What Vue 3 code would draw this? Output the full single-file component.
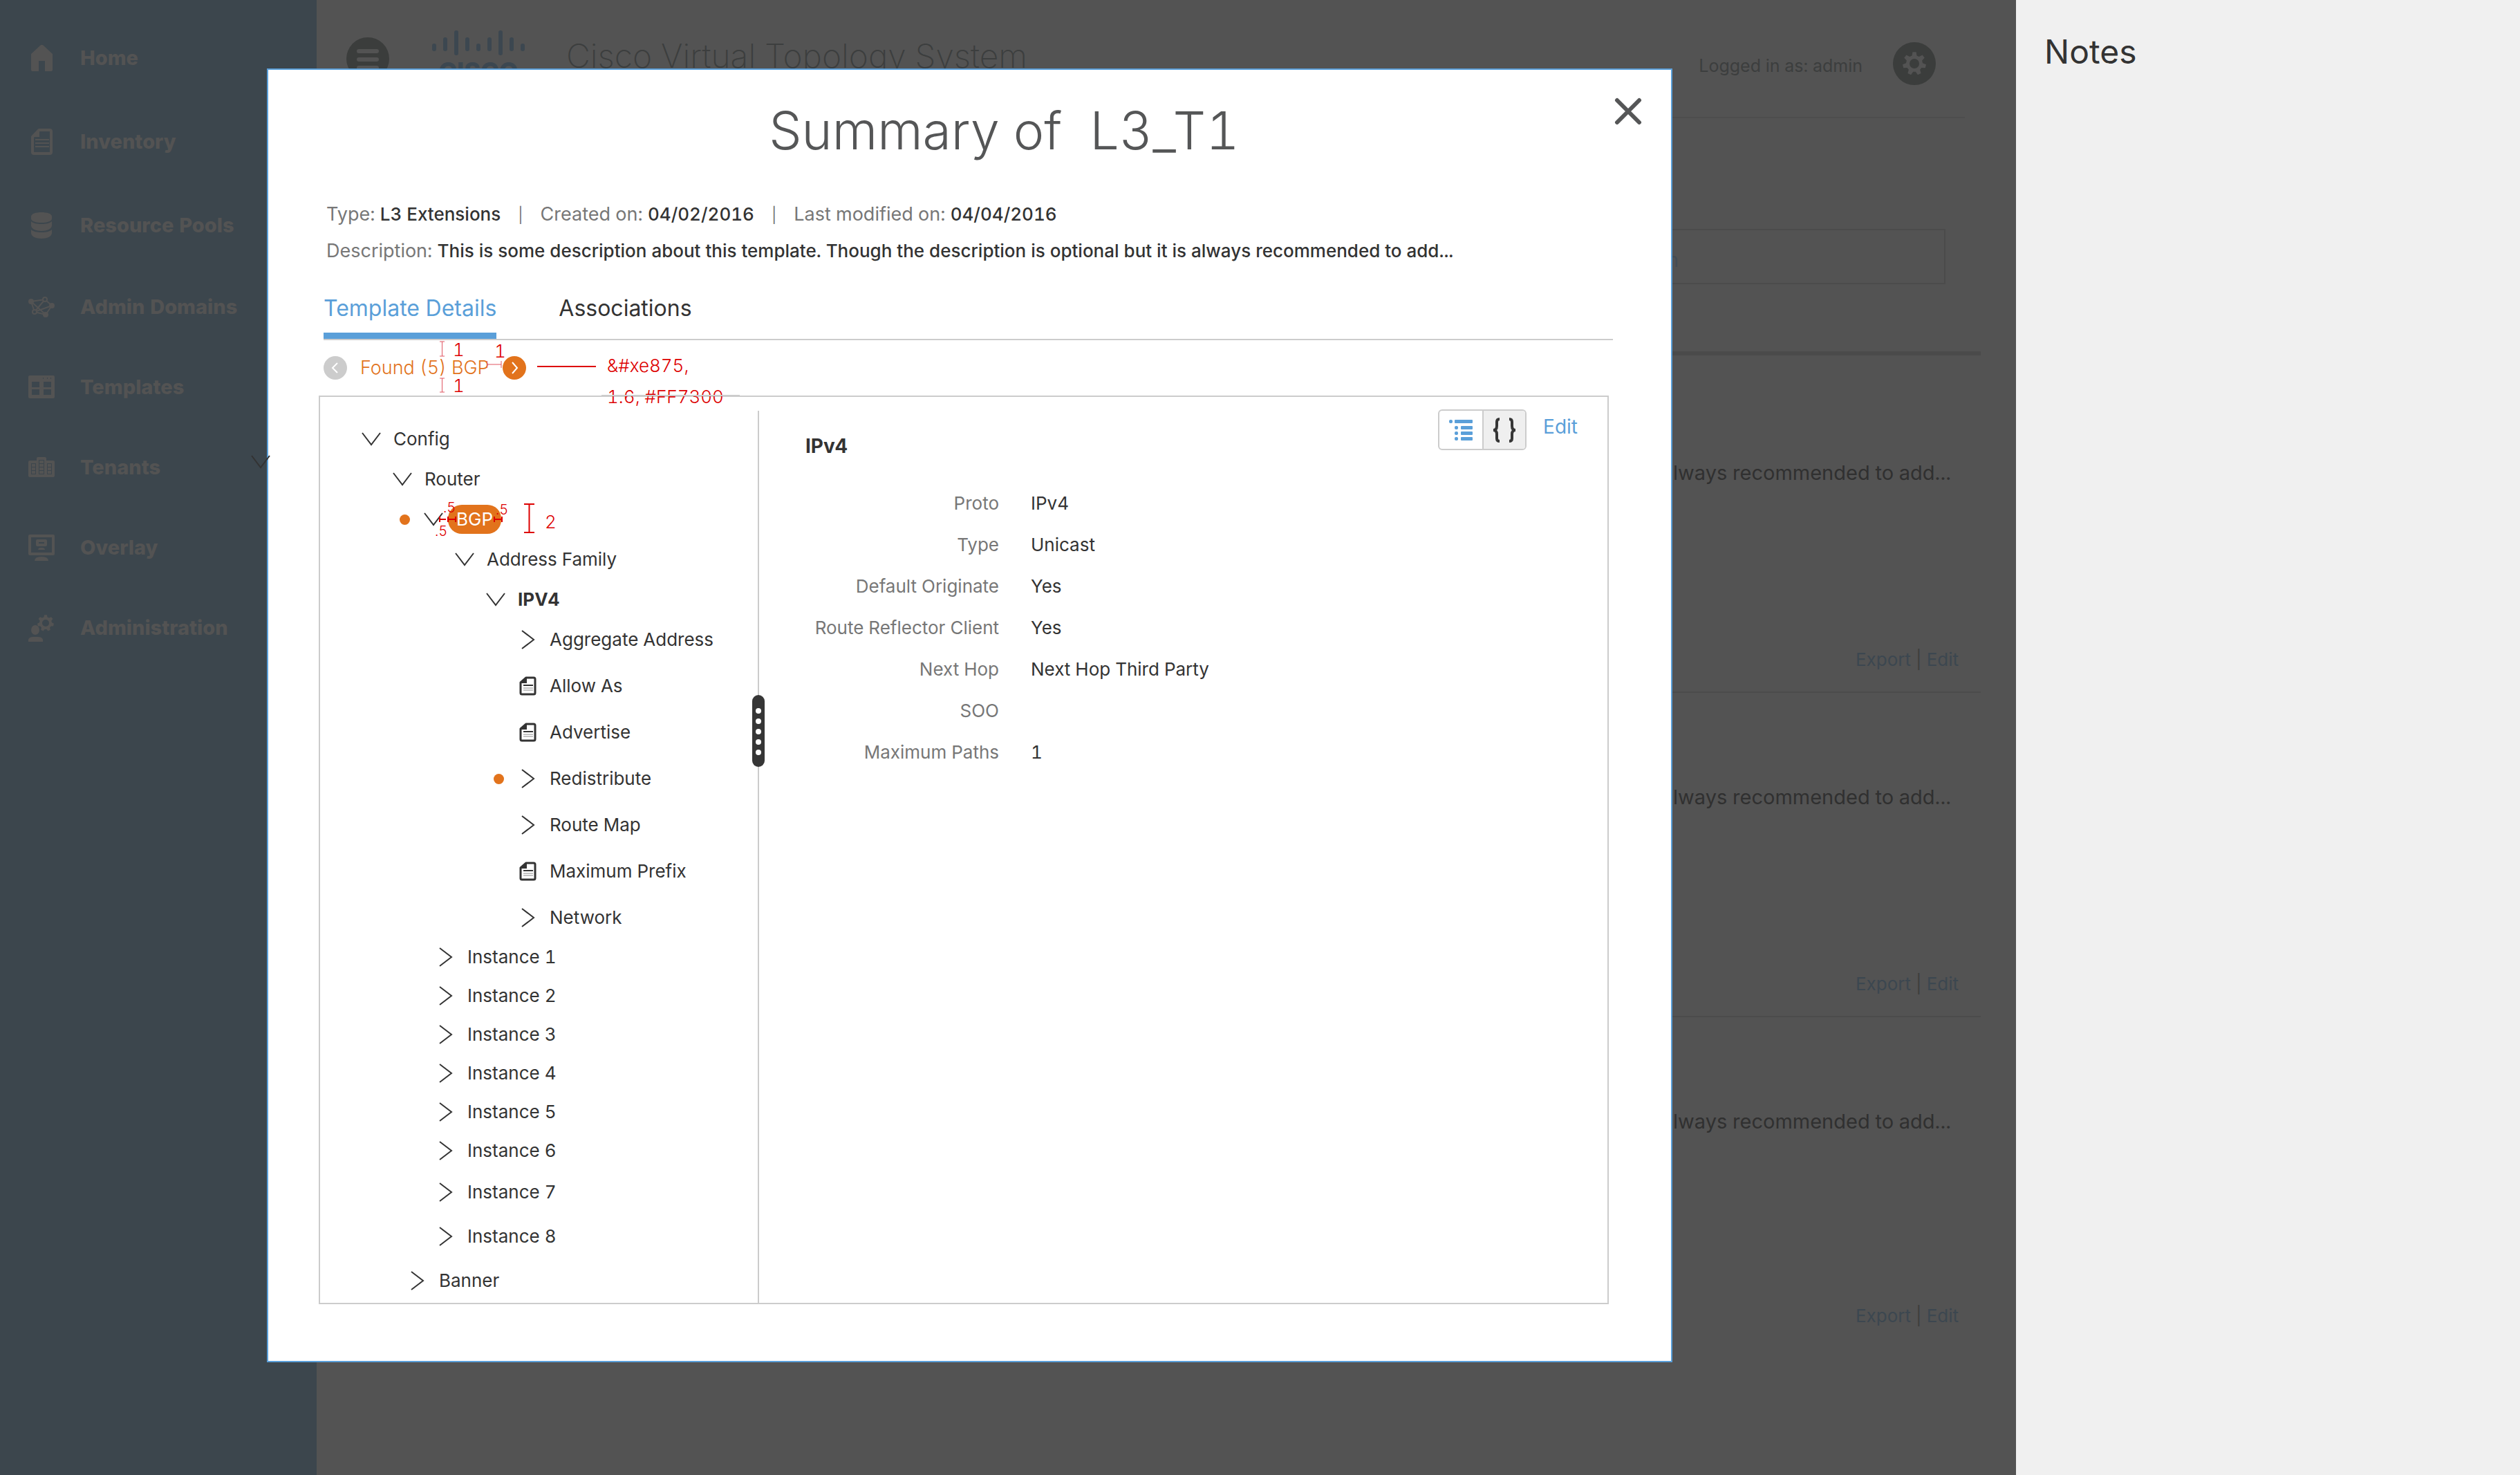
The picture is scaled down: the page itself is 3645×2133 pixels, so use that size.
<script setup>
const primaryNav = [
  { icon: 'home', label: 'Home' },
  { icon: 'document', label: 'Inventory' },
  { icon: 'database', label: 'Resource Pools' },
]
const secondaryNav = [
  { icon: 'network', label: 'Admin Domains' },
  { icon: 'template', label: 'Templates' },
  { icon: 'buildings', label: 'Tenants' },
  { icon: 'monitor', label: 'Overlay' },
  { icon: 'admin', label: 'Administration' },
]
const navGroups = [
  { name: 'primary', items: primaryNav },
  { name: 'secondary', items: secondaryNav },
]

const tree = [
  {
    name: 'branch',
    nodes: [
      { label: 'Config', icon: 'down', indent: 60 },
      { label: 'Router', icon: 'down', indent: 105 },
      { label: 'BGP', icon: 'down', indent: 150, hit: true, badge: true },
      { label: 'Address Family', icon: 'down', indent: 195 },
      { label: 'IPV4', icon: 'down', indent: 240, active: true },
      { label: 'Aggregate Address', icon: 'right', indent: 286 },
    ],
  },
  {
    name: 'leaf',
    nodes: [
      { label: 'Allow As', icon: 'doc', indent: 286 },
      { label: 'Advertise', icon: 'doc', indent: 286 },
      { label: 'Redistribute', icon: 'right', indent: 286, hit: true },
      { label: 'Route Map', icon: 'right', indent: 286 },
      { label: 'Maximum Prefix', icon: 'doc', indent: 286 },
      { label: 'Network', icon: 'right', indent: 286 },
    ],
  },
  {
    name: 'instance',
    nodes: [1, 2, 3, 4, 5, 6].map((n) => ({ label: `Instance ${n}`, icon: 'right', indent: 167 })),
  },
  {
    name: 'tail',
    nodes: [
      { label: 'Instance 7', icon: 'right', indent: 167 },
      { label: 'Instance 8', icon: 'right', indent: 167 },
      { label: 'Banner', icon: 'right', indent: 126 },
    ],
  },
]

const details = [
  ['Proto', 'IPv4'],
  ['Type', 'Unicast'],
  ['Default Originate', 'Yes'],
  ['Route Reflector Client', 'Yes'],
  ['Next Hop', 'Next Hop Third Party'],
  ['SOO', ''],
  ['Maximum Paths', '1'],
]

// Seven-toothed cog with a round hole, drawn around (cx, cy).
function cog(cx, cy, outer, inner, hole) {
  const step = (Math.PI * 2) / 7
  const pts = []
  for (let i = 0; i < 7; i++) {
    const a = i * step - Math.PI / 2
    for (const [r, d] of [[inner, -0.33], [outer, -0.17], [outer, 0.17], [inner, 0.33]]) {
      pts.push(`${(cx + r * Math.cos(a + d * step)).toFixed(2)} ${(cy + r * Math.sin(a + d * step)).toFixed(2)}`)
    }
  }
  return `M${pts.join('L')}ZM${cx - hole} ${cy}a${hole} ${hole} 0 1 0 ${hole * 2} 0a${hole} ${hole} 0 1 0 ${-hole * 2} 0Z`
}
const settingsCog = cog(31, 31, 17, 12, 7)
const adminCog = cog(26, 13, 12, 9, 5)

const logoBars = [
  [61, 72], [52, 72], [42, 78], [52, 72], [61, 72], [52, 72], [42, 78], [52, 72], [61, 72],
]
</script>

<template>
  <div class="page">
    <div class="stage">
      <div class="app">
        <nav class="sidebar">
          <ul v-for="group in navGroups" :key="group.name" :class="['nav', group.name]">
            <li v-for="item in group.items" :key="item.label">
              <a href="#">
                <svg width="40" height="40" viewBox="0 0 40 40" aria-hidden="true">
                  <path v-if="item.icon === 'home'" fill="currentColor" d="M18.500 1.500q2-1.500 4 0L36 14v23q0 2-2 2h-9V24H16v15H7q-2 0-2-2V14Z" />
                  <g v-else-if="item.icon === 'document'" fill="none" stroke="currentColor">
                    <path stroke-width="4" stroke-linejoin="round" d="M16.500 3H32q2 0 2 2v30q0 2-2 2H9q-2 0-2-2V13Z" />
                    <path fill="currentColor" stroke="none" d="M17 2v11H6Z" />
                    <path stroke-width="2" d="M11 17h20M11 22h20M11 27h20" />
                  </g>
                  <g v-else-if="item.icon === 'database'" fill="currentColor">
                    <path d="M5 7C5 3 12 1 20 1s15 2 15 6v3c0 4-7 6-15 6S5 14 5 10Z" />
                    <path d="M5 14c3 3 9 4 15 4s12-1 15-4v6c0 5-7 8-15 8S5 25 5 20Z" />
                    <path d="M5 26c3 3 9 4 15 4s12-1 15-4v5c0 5-7 8-15 8S5 36 5 31Z" />
                  </g>
                  <g v-else-if="item.icon === 'network'" fill="none" stroke="currentColor" stroke-width="2">
                    <path d="M5 12 25 9 35 18 26 31 5 12 10 27 25 9M10 27l16 4M10 27 35 18" />
                    <circle cx="5" cy="12" r="4" fill="currentColor" stroke="none" />
                    <circle cx="35" cy="18" r="4" fill="currentColor" stroke="none" />
                    <circle cx="26" cy="31" r="4" fill="currentColor" stroke="none" />
                    <circle cx="25" cy="9" r="3" fill="#3c464d" />
                    <circle cx="10" cy="27" r="3" fill="#3c464d" />
                  </g>
                  <path v-else-if="item.icon === 'template'" fill="currentColor" fill-rule="evenodd" d="M3 3h34q2 0 2 2v29q0 2-2 2H3q-2 0-2-2V5q0-2 2-2ZM6 12v8h11v-8ZM23 12v8h11v-8ZM6 23v8h11v-8ZM23 23v8h11v-8ZM22 6h1v2h-1ZM28 6h1v2h-1ZM33 6h1v2h-1Z" />
                  <g v-else-if="item.icon === 'buildings'" fill="currentColor">
                    <path fill-rule="evenodd" d="M3 10h10V7q0-2 2-2h10q2 0 2 2v3h10q2 0 2 2v20q0 2-2 2H3q-2 0-2-2V12q0-2 2-2ZM5 14v16h7V14ZM16 9v21h8V9ZM28 14v16h7V14Z" />
                    <path d="M6 15h5v4H6zM6 20h5v4H6zM6 25h5v4H6zM17 10h6v4h-6zM17 15h6v4h-6zM17 20h6v4h-6zM17 25h6v4h-6zM29 15h5v4h-5zM29 20h5v4h-5zM29 25h5v4h-5z" />
                  </g>
                  <g v-else-if="item.icon === 'monitor'">
                    <path fill="none" stroke="currentColor" stroke-width="4" stroke-linejoin="round" d="M3 3h34v26H3ZM14 10h12v6H14Z" />
                    <path fill="currentColor" d="M15 23q0-3 5-3t5 3ZM10 39q0-6 10-6t10 6Z" />
                  </g>
                  <g v-else fill="currentColor">
                    <path fill-rule="evenodd" :d="adminCog" />
                    <ellipse cx="11" cy="23" rx="6" ry="7" />
                    <path d="M1 40v-3q1-4 7-4h7q6 0 7 4v3Z" />
                  </g>
                </svg>
                <span>{{ item.label }}</span>
              </a>
            </li>
          </ul>
        </nav>

        <div class="main">
          <header class="topbar">
            <button class="menu" aria-label="Menu">
              <svg width="62" height="62" viewBox="0 0 62 62">
                <circle cx="31" cy="31" r="31" fill="#3b3d3c" />
                <path stroke="#535353" stroke-width="6" stroke-linecap="round" d="M18 20h26M18 32h26M18 44h26" />
              </svg>
            </button>
            <svg class="logo" width="134" height="86" viewBox="0 40 134 86" aria-label="Cisco">
              <path v-for="(bar, i) in logoBars" :key="i" :d="`M${3 + i * 16} ${bar[0] + 3}V${bar[1] - 3}`" stroke="#3c4750" stroke-width="6" stroke-linecap="round" />
              <text x="67" y="114" text-anchor="middle">CISCO</text>
            </svg>
            <h1>Cisco Virtual Topology System</h1>
            <div class="account">
              <span>Logged in as: admin</span>
              <button aria-label="Settings">
                <svg width="62" height="62" viewBox="0 0 62 62">
                  <circle cx="31" cy="31" r="31" fill="#3b3d3c" />
                  <path fill="#535353" fill-rule="evenodd" :d="settingsCog" />
                </svg>
              </button>
            </div>
          </header>
          <div class="search">
            <input type="text" placeholder="Description" aria-label="Description" />
          </div>
          <ul class="cards">
            <li v-for="n in 3" :key="n">
              <p>always recommended to add...</p>
              <div class="actions"><a href="#">Export</a> | <a href="#">Edit</a></div>
            </li>
          </ul>
        </div>
      </div>

      <section class="dialog" role="dialog" aria-labelledby="dialog-title">
        <header class="dialog-head">
          <h2 id="dialog-title">Summary of&nbsp; L3_T1</h2>
          <button class="close" aria-label="Close">
            <svg width="40" height="40" viewBox="0 0 40 40"><path d="M4 4 36 36M36 4 4 36" stroke="#555657" stroke-width="6" stroke-linecap="round" /></svg>
          </button>
        </header>

        <div class="meta">
          <p>
            <span>Type: <b>L3 Extensions</b></span><i>|</i><span>Created on: <b>04/02/2016</b></span><i>|</i><span>Last modified on: <b>04/04/2016</b></span>
          </p>
          <p>Description: <b>This is some description about this template. Though the description is optional but it is always recommended to add...</b></p>
        </div>

        <div class="tabs" role="tablist">
          <button class="current" role="tab" aria-selected="true">Template Details</button>
          <button role="tab" aria-selected="false">Associations</button>
        </div>

        <div class="finder">
          <button aria-label="Previous match" disabled>
            <svg width="34" height="34" viewBox="0 0 34 34"><circle cx="17" cy="17" r="17" fill="#ccc" /><path d="m20 10-7 7 7 7" fill="none" stroke="#fff" stroke-width="2" /></svg>
          </button>
          <span>Found (5) BGP</span>
          <button aria-label="Next match">
            <svg width="34" height="34" viewBox="0 0 34 34"><circle cx="17" cy="17" r="17" fill="#e2731c" /><path d="m14 9 7 8-7 8" fill="none" stroke="#fff" stroke-width="2" /></svg>
          </button>
        </div>

        <div class="panel">
          <div class="tree">
            <ul v-for="group in tree" :key="group.name" :class="group.name">
              <li v-for="node in group.nodes" :key="node.label" :style="{ paddingLeft: node.indent + 'px' }">
                <button :class="{ active: node.active }">
                  <i v-if="node.hit" class="hit"></i>
                  <svg width="28" height="28" viewBox="0 0 28 28" aria-hidden="true">
                    <path v-if="node.icon === 'down'" d="m1 5 13 17L27 5" fill="none" stroke="#333" stroke-width="2" />
                    <path v-else-if="node.icon === 'right'" d="m6 1 17 13L6 27" fill="none" stroke="#333" stroke-width="2" />
                    <g v-else fill="none" stroke="#333">
                      <path d="M12 2h11q2 0 2 2v20q0 2-2 2H6q-2 0-2-2V9Z" stroke-width="3" stroke-linejoin="round" />
                      <path d="M13 2v8H4Z" fill="#333" stroke="none" />
                      <path d="M8 13h14" stroke-width="2" />
                      <path d="M8 17h14M8 20h14" stroke="#888" />
                    </g>
                  </svg>
                  <span :class="{ badge: node.badge }">{{ node.label }}</span>
                </button>
              </li>
            </ul>
            <div class="divider">
              <svg width="18" height="104" viewBox="0 0 18 104" aria-hidden="true">
                <rect width="18" height="104" rx="9" fill="#363636" />
                <circle v-for="n in 5" :key="n" cx="9" :cy="8 + n * 15" r="4" fill="#fff" />
              </svg>
            </div>
          </div>

          <div class="details">
            <div class="details-head">
              <h3>IPv4</h3>
              <div class="toggle">
                <button aria-label="Tree view">
                  <svg width="34" height="32" viewBox="0 0 34 32" fill="#5a9fd9">
                    <rect x="0" y="1" width="5" height="5" rx="2" /><rect x="8" y="1" width="26" height="5" rx="1" />
                    <rect x="8" y="10" width="5" height="5" rx="2" /><rect x="17" y="10" width="17" height="5" rx="1" />
                    <rect x="8" y="18" width="5" height="5" rx="2" /><rect x="17" y="18" width="17" height="5" rx="1" />
                    <rect x="8" y="26" width="5" height="5" rx="2" /><rect x="17" y="26" width="17" height="5" rx="1" />
                  </svg>
                </button>
                <button class="pressed" aria-label="Code view">
                  <svg width="34" height="36" viewBox="0 0 34 36" fill="none" stroke="#363636" stroke-width="4">
                    <path d="M10 2q-4 0-4 4v6q0 6-5 6q5 0 5 6v6q0 4 4 4M24 2q4 0 4 4v6q0 6 5 6q-5 0-5 6v6q0 4-4 4" />
                  </svg>
                </button>
              </div>
              <a href="#">Edit</a>
            </div>
            <dl>
              <div v-for="row in details" :key="row[0]">
                <dt>{{ row[0] }}</dt>
                <dd>{{ row[1] }}</dd>
              </div>
            </dl>
          </div>
        </div>
      </section>

      <!-- Spacing notes drawn over the dialog; the origin is the dialog's corner. -->
      <svg class="notes-layer" width="760" height="720" viewBox="386 99 760 720">
        <g fill="none" stroke="#e05560">
          <path d="M636 494h7M639.500 494v21M636 515h7M636 547h7M639.500 547v20M636 567h7" />
          <path d="M704.500 522v10M704 527h21M725 522v10" />
        </g>
        <g fill="none" stroke="#dd0000" stroke-width="2">
          <path d="M777 530h85M758 729h15M765.500 729v41M758 770h15" />
          <path d="M636 747v8M636 751h9M648 747v8M648 751h11M659 747v8M715 747v8M715 751h12M726 747v8" />
        </g>
        <g class="note">
          <text x="655" y="515">1</text>
          <text x="655" y="567">1</text>
          <text x="715" y="517">1</text>
          <text x="878" y="538">&amp;#xe875,</text>
          <text x="878" y="583">1.6, #FF7300</text>
          <text x="788" y="764">2</text>
        </g>
        <g class="note small">
          <text x="641" y="741">.5</text>
          <text x="717" y="744">.5</text>
          <text x="629" y="775">.5</text>
        </g>
        <path d="M870 572h200" stroke="#ccc" stroke-width="2" />
      </svg>
      <svg class="stray" width="28" height="20" viewBox="0 0 28 20" aria-hidden="true"><path d="m1 1 13 17L27 1" fill="none" stroke="#333" stroke-width="2" /></svg>
    </div>

    <aside class="notes">
      <h2>Notes</h2>
    </aside>
  </div>
</template>

<style>
body {
  margin: 0;
}
</style>

<style scoped>
.page {
  display: flex;
  min-height: 100vh;
  font-family: Inter, "Liberation Sans", sans-serif;
  font-size: 26px;
  line-height: 38px;
  font-variant-numeric: tabular-nums;
  color: #333;
  background: #535353;
}
h1, h2, h3, p, ul, dl, dd {
  margin: 0;
  padding: 0;
}
ul {
  list-style: none;
}
a {
  text-decoration: none;
}
button {
  padding: 0;
  border: 0;
  background: none;
  font: inherit;
  font-variant-numeric: inherit;
  color: inherit;
}
svg {
  display: block;
  flex: none;
}
i {
  font-style: normal;
}

.stage {
  position: relative;
  display: grid;
  flex: 1;
  min-width: 0;
}
.app {
  grid-area: 1 / 1;
  display: flex;
}

/* Sidebar */
.sidebar {
  box-sizing: border-box;
  width: 458px;
  padding-top: 23px;
  background: #3c464d;
}
.nav a {
  display: flex;
  align-items: center;
  gap: 36px;
  padding-left: 40px;
  font-size: 29px;
  font-weight: 800;
  color: #535353;
}
.primary a {
  height: 121px;
}
.secondary a {
  height: 116px;
}

/* Page behind the dialog */
.main {
  flex: 1;
  min-width: 0;
  color: #3c3e3e;
}
.topbar {
  display: flex;
  align-items: center;
  height: 169px;
  margin: 0 74px 0 43px;
  padding-right: 42px;
  border-bottom: 2px solid #4d4d4d;
}
.logo {
  margin-left: 62px;
}
.logo text {
  font-size: 36px;
  font-weight: 800;
  fill: #3c4750;
}
h1 {
  flex: 1;
  margin-left: 60px;
  padding-bottom: 8px;
  font-size: 48px;
  font-weight: 200;
  line-height: 60px;
}
.account {
  display: flex;
  align-items: center;
  gap: 44px;
  padding-top: 14px;
}
.account span {
  padding-top: 6px;
  font-size: 25px;
}
.search {
  display: flex;
  justify-content: flex-end;
  margin: 160px 51px 0 43px;
  padding: 0 51px 97px 0;
  border-bottom: 6px solid #4a4a4a;
}
.search input {
  box-sizing: border-box;
  width: 640px;
  height: 80px;
  padding: 10px 384px 0 16px;
  border: 2px solid #4b4b4b;
  background: none;
  font: inherit;
  font-size: 28px;
  text-align: right;
}
.search input::placeholder {
  color: #444c55;
  opacity: 1;
}
.cards {
  margin: 0 51px 0 43px;
  padding-top: 19px;
  text-align: right;
}
.cards li {
  box-sizing: border-box;
  height: 469px;
  padding-top: 132px;
  border-bottom: 2px solid #4b4b4b;
}
.cards li:last-child {
  border-bottom: 0;
}
.cards p {
  padding-right: 43px;
  font-size: 29px;
  color: #303030;
}
.actions {
  margin-top: 232px;
  padding-right: 32px;
}
.cards li:last-child .actions {
  margin-top: 243px;
}
.actions a {
  color: #3c4750;
}

/* Dialog */
.dialog {
  grid-area: 1 / 1;
  z-index: 1;
  align-self: start;
  margin: 99px 497px 166px 386px;
  padding-bottom: 82px;
  border: 2px solid #5a9fd9;
  background: #fff;
}
.dialog-head {
  display: flex;
  align-items: flex-start;
  padding: 48px 42px 0 182px;
}
.dialog-head h2 {
  flex: 1;
  font-size: 75px;
  font-weight: 300;
  line-height: 80px;
  text-align: center;
  color: #555657;
}
.close {
  margin-top: -8px;
}
.meta {
  padding: 55px 80px 0 84px;
  font-size: 27px;
  line-height: 52px;
  color: #777;
}
.meta b {
  font-size: 26px;
  font-weight: 500;
  color: #333;
}
.meta i {
  padding: 0 25px;
  font-size: 22px;
}
.tabs {
  display: flex;
  gap: 90px;
  margin: 37px 84px 0 80px;
  border-bottom: 2px solid #ccc;
}
.tabs button {
  padding-bottom: 15px;
  border-bottom: 9px solid transparent;
  font-size: 32px;
  line-height: 40px;
}
.tabs .current {
  border-color: #5a9fd9;
  color: #5a9fd9;
}
.finder {
  display: flex;
  align-items: center;
  gap: 19px;
  height: 80px;
  padding-left: 80px;
  font-size: 27px;
  font-weight: 300;
  color: #e2731c;
}

.panel {
  display: flex;
  margin: 0 90px 0 73px;
  border: 2px solid #ccc;
}
.tree {
  position: relative;
  width: 635px;
  padding-top: 32px;
}
.tree li,
.tree button {
  display: flex;
  align-items: center;
}
.tree button {
  position: relative;
  gap: 18px;
}
.branch li {
  height: 58px;
}
.leaf {
  padding-top: 4px;
}
.leaf li {
  height: 67px;
}
.instance {
  margin-top: -4px;
}
.instance li {
  height: 56px;
}
.tail li {
  height: 64px;
}
.active {
  font-weight: 700;
}
.badge {
  margin-left: -11px;
  padding: 0 12px;
  border-radius: 20px;
  line-height: 42px;
  color: #fff;
  background: #e2731c;
}
.hit {
  position: absolute;
  top: 50%;
  left: -35px;
  width: 15px;
  height: 15px;
  margin-top: -7px;
  border-radius: 50%;
  background: #e2731c;
}
.divider {
  position: absolute;
  top: 20px;
  right: 0;
  bottom: 0;
  display: flex;
  justify-content: center;
  width: 2px;
  background: #ccc;
}
.divider svg {
  margin-top: 411px;
}

.details {
  flex: 1;
  padding: 18px 43px 0 67px;
}
.details-head {
  display: flex;
  align-items: flex-start;
}
.details-head h3 {
  flex: 1;
  margin-top: 34px;
  font-size: 28px;
}
.details-head a {
  margin-left: 24px;
  font-size: 28px;
  line-height: 50px;
  color: #5a9fd9;
}
.toggle {
  display: flex;
  border: 2px solid #ccc;
  border-radius: 6px;
  overflow: hidden;
}
.toggle button {
  display: flex;
  align-items: center;
  justify-content: center;
  width: 62px;
  height: 55px;
}
.toggle .pressed {
  border-left: 2px solid #ccc;
  background: #efefef;
}
dl {
  margin-top: 34px;
}
dl div {
  display: flex;
  gap: 46px;
  line-height: 60px;
}
dt {
  width: 280px;
  text-align: right;
  color: #777;
}

/* Layers above the dialog */
.notes-layer {
  position: absolute;
  top: 99px;
  left: 386px;
  z-index: 2;
}
.note {
  font-size: 26px;
  font-weight: 300;
  fill: #dd0000;
}
.small {
  font-size: 20px;
}
.stray {
  position: absolute;
  top: 658px;
  left: 363px;
  z-index: 2;
}

.notes {
  box-sizing: border-box;
  width: 20%;
  padding: 45px 41px;
  background: #f0f0f0;
}
.notes h2 {
  font-size: 48px;
  font-weight: 400;
  line-height: 60px;
}
</style>
